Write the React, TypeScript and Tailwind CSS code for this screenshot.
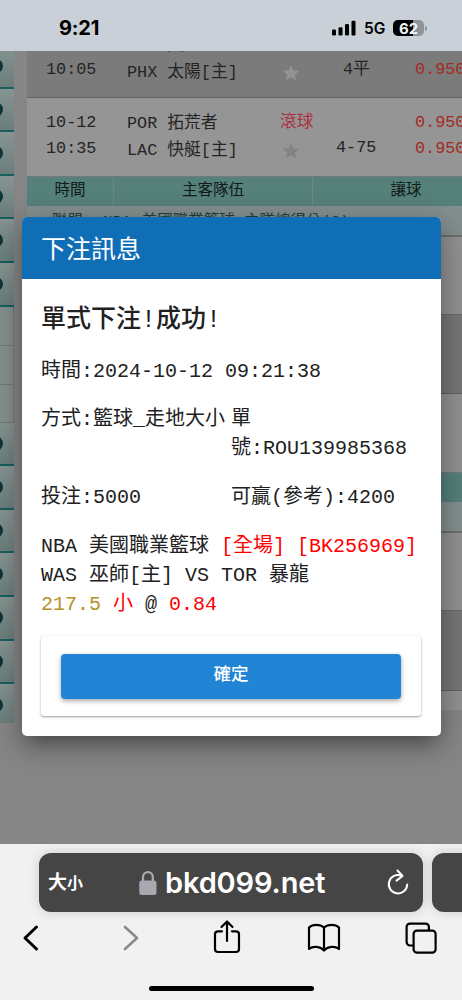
import clsx from 'clsx'
import type { ReactNode } from 'react'

const mono = "font-['Liberation_Mono','Noto_Sans_CJK_TC',monospace]"
const sans = "font-['Inter','Noto_Sans_CJK_TC',sans-serif]"

function StatusBar() {
  return (
    <header className={clsx(sans, 'flex h-[51px] shrink-0 items-start justify-between bg-[#c9d0d8] pl-[59px] pr-[35px]')}>
      <span className="pt-[14px] text-[20px] font-bold leading-[28px] tracking-[-0.2px] text-black">9:21</span>
      <div className="flex items-center pt-[17px]">
        <svg width="24" height="16" viewBox="0 0 24 16">
          <rect x="0" y="9.5" width="4" height="6" rx="1.2" />
          <rect x="6.5" y="7.2" width="4" height="8.3" rx="1.2" />
          <rect x="13" y="4" width="4" height="11.5" rx="1.2" />
          <rect x="19.5" y="0.7" width="4" height="14.8" rx="1.2" />
        </svg>
        <span className="ml-[8px] w-[22px] pt-[2px] text-[15.5px] font-semibold leading-[20px] text-black">5G</span>
        <div className="ml-[7px] flex h-[16px] w-[31px] items-center justify-center rounded-[5px] bg-[linear-gradient(90deg,#000_64%,#8e949c_64%)]">
          <span className="text-[15px] font-bold leading-none text-[#f1f4f7]">62</span>
        </div>
        <div className="ml-[1px] h-[5px] w-[2px] rounded-r-full bg-[#8e949c]" />
      </div>
    </header>
  )
}

function MenuItem({ last }: { last?: boolean }) {
  return (
    <div
      className={clsx(
        'flex shrink-0 items-center overflow-hidden bg-linear-to-b from-[#869492] to-[#6b7e7b]',
        last ? 'h-[39px] pt-[3px]' : 'h-[43.6px] border-b-2 border-[#17605f]',
      )}
    >
      <div className="-ml-[12px] size-[14.5px] rounded-full bg-[#0c3535]" />
    </div>
  )
}

function SideMenu() {
  return (
    <aside className="flex w-[14px] shrink-0 flex-col overflow-hidden">
      <div className="-mt-[6px] shrink-0">
        {[0, 1, 2, 3, 4, 5].map((i) => (
          <MenuItem key={i} />
        ))}
      </div>
      <div className="h-[116px] shrink-0 border-r border-[#727876] bg-[#84908e]">
        <div className="h-[39px] border-b border-[#727876]" />
        <div className="h-[39px] border-b border-[#727876]" />
        <div className="h-[38px] border-b border-[#727876]" />
      </div>
      {[0, 1, 2, 3, 4, 5, 6].map((i) => (
        <MenuItem key={i} last={i === 6} />
      ))}
    </aside>
  )
}

function Star({ className }: { className: string }) {
  return (
    <svg width="18" height="18" viewBox="0 0 24 24" className={className}>
      <path d="M12 1l3 7.6 8.2.5-6.3 5.2 2.1 8-7-4.500-7 4.500 2.100-8L.8 9.100l8.200-.5z" fill="currentColor" />
    </svg>
  )
}

function TableHead({ labels = true }: { labels?: boolean }) {
  return (
    <div className="flex h-[30px] shrink-0 border-t border-[#747a79] bg-[#56807a] text-center text-[15.5px] leading-[28px] text-[#101b1a]">
      <div className="w-[87px] shrink-0 border-r border-[#748582]">{labels && '時間'}</div>
      <div className="w-[199px] shrink-0 border-r border-[#748582]">{labels && '主客隊伍'}</div>
      <div className="w-[186px] shrink-0">{labels && '讓球'}</div>
    </div>
  )
}

function GameRow({ className, time, teams, extra, line, odds }: {
  className: string
  time: ReactNode
  teams: ReactNode
  extra: ReactNode
  line: ReactNode
  odds: ReactNode
}) {
  return (
    <div className={clsx('flex shrink-0 overflow-hidden whitespace-pre text-[16.8px] leading-[25.500px] text-[#242424]', className)}>
      <div className="w-[81px] shrink-0">{time}</div>
      <div className="w-[153px] shrink-0 pt-[1px] leading-[26.500px]">{teams}</div>
      <div className="w-[56px] shrink-0">{extra}</div>
      <div className="w-[79px] shrink-0">{line}</div>
      <div className="shrink-0 text-[#a32b22]">{odds}</div>
    </div>
  )
}

function OddsTable() {
  return (
    <main className="ml-[13px] flex w-[435px] shrink-0 flex-col overflow-hidden">
      <GameRow
        className="h-[47px] items-end border-b border-[#636363] bg-[#7b7b7b] pb-[15px] pl-[19px]"
        time={<div>10:05</div>}
        teams={<div className="-mb-[4px]"><div>SAC 國王</div><div>PHX 太陽[主]</div></div>}
        extra={<Star className="ml-[2px] text-[#949494]" />}
        line={<div className="pl-[7px]">4平</div>}
        odds={<div>0.950</div>}
      />
      <GameRow
        className="h-[78px] bg-[#959595] pl-[19px] pt-[12px]"
        time={<><div>10-12</div><div>10:35</div></>}
        teams={<><div>POR 拓荒者</div><div>LAC 快艇[主]</div></>}
        extra={<><div className="text-[#ad3340]">滾球</div><Star className="ml-[2px] mt-[6px] text-[#838383]" /></>}
        line={<div className="pt-[25px]">4-75</div>}
        odds={<><div>0.950</div><div>0.950</div></>}
      />
      <TableHead />
      <div className="h-[31px] shrink-0 whitespace-pre border-b-2 border-[#6b6f6e] bg-[#84908e] pl-[25px] pt-[3px] text-[15.500px] leading-[26px] text-[#213f3d] [word-spacing:1.5px]">
        聯盟: NBA 美國職業籃球-主隊總得分(Q)
      </div>
      <div className="h-[78px] shrink-0 border-b border-[#6a6a6a] bg-[#929292]" />
      <div className="h-[79px] shrink-0 border-b border-[#606060] bg-[#777777]" />
      <div className="h-[78px] shrink-0 bg-[#929292]" />
      <TableHead labels={false} />
      <div className="h-[31px] shrink-0 border-b-2 border-[#6b6f6e] bg-[#84908e]" />
      <div className="h-[78px] shrink-0 border-b border-[#6a6a6a] bg-[#929292]" />
      <div className="h-[80px] shrink-0 border-b border-[#606060] bg-[#777777]" />
      <div className="h-[19px] shrink-0 bg-[#929292]" />
    </main>
  )
}

function BetDialog() {
  return (
    <section className="absolute left-[22px] top-[166px] flex h-[519px] w-[419px] flex-col overflow-hidden rounded-[5px] bg-white text-[20px] leading-[29px] text-[#212121] shadow-[0_12px_18px_-8px_rgba(0,0,0,0.35),0_8px_28px_6px_rgba(0,0,0,0.22)]">
      <h2 className="h-[62px] shrink-0 bg-[#106eb7] pl-[19px] pt-[4px] text-[25px] font-normal leading-[61px] text-white">下注訊息</h2>
      <div className="flex flex-col pl-[19px] pr-5 pt-[23px]">
        <h3 className="text-[25px] font-medium leading-[38px]">單式下注!成功!</h3>
        <p className="mt-[17px]">時間:2024-10-12 09:21:38</p>
        <div className="mt-[19px] flex whitespace-nowrap">
          <p className="w-[190px]">方式:籃球_走地大小</p>
          <p>單<br />號:ROU139985368</p>
        </div>
        <div className="mt-[20px] flex whitespace-nowrap">
          <p className="w-[190px]">投注:5000</p>
          <p>可贏(參考):4200</p>
        </div>
        <p className="mt-[20px] whitespace-nowrap">
          NBA 美國職業籃球 <span className="text-[#ff0000]">[全場] [BK256969]</span>
          <br />
          WAS 巫師[主] VS TOR 暴龍
          <br />
          <span className="text-[#b8902a]">217.5</span> <span className="text-[#ff0000]">小</span> @ <span className="text-[#ff0000]">0.84</span>
        </p>
        <div className="mt-[17px] h-[80px] rounded-[3px] px-5 pt-[18px] shadow-[0_1px_3px_rgba(0,0,0,0.28),0_1px_1px_rgba(0,0,0,0.14)]">
          <button className="h-[45px] w-full rounded-[4px] bg-[#2184d5] pb-[3px] text-[17.5px] font-medium leading-[42px] text-white shadow-[0_2px_5px_rgba(0,0,0,0.35)]">
            確定
          </button>
        </div>
      </div>
    </section>
  )
}

function BrowserBar() {
  return (
    <footer className={clsx(sans, 'flex h-[156px] shrink-0 flex-col overflow-hidden bg-[#f1f1f1] pt-[9px]')}>
      <div className="ml-[39px] flex h-[59px] w-[440px] shrink-0 gap-[9px]">
        <div className="flex w-[384px] shrink-0 items-center rounded-[12px] bg-[#454545] pl-[9px] text-white shadow-[0_0_12px_rgba(0,0,0,0.16)]">
          <span className="w-[91px] whitespace-nowrap text-[19px] font-bold leading-[30px]">
            大<span className="text-[16px]">小</span>
          </span>
          <svg width="18" height="26" viewBox="0 0 18 26" className="shrink-0">
            <rect x="0.3" y="10.500" width="17.200" height="14.500" rx="2.500" fill="#a9a8b0" />
            <path d="M4 11.500V7a4.900 4.900 0 0 1 9.800 0v4.500" fill="none" stroke="#a9a8b0" strokeWidth="2.300" />
          </svg>
          <span className="ml-[8px] w-[221px] pt-px text-[29px] font-semibold leading-[40px] tracking-[-0.15px]">bkd099.net</span>
          <svg width="24" height="28" viewBox="0 0 24 28" fill="none" stroke="#fff" strokeWidth="2" strokeLinecap="round" strokeLinejoin="round" className="shrink-0">
            <path d="M15.500 6.700A9.200 9.200 0 1 0 21.200 15.500" />
            <path d="M11.500 1.500l5 5.500-6 4.600" />
          </svg>
        </div>
        <div className="w-[60px] shrink-0 rounded-[12px] bg-[#454545] shadow-[0_0_12px_rgba(0,0,0,0.16)]" />
      </div>
      <div className="-ml-[18px] grid h-[52px] w-[488px] shrink-0 grid-cols-5 place-items-center">
        <svg width="18" height="28" viewBox="0 0 18 28" fill="none" stroke="#000" strokeWidth="3" strokeLinecap="round" strokeLinejoin="round">
          <path d="M14.500 3L3 14l11.500 11" />
        </svg>
        <svg width="18" height="28" viewBox="0 0 18 28" fill="none" stroke="#8a8a8a" strokeWidth="2.600" strokeLinecap="round" strokeLinejoin="round" className="ml-[5px]">
          <path d="M3 3l12 11L3 25" />
        </svg>
        <svg width="28" height="36" viewBox="0 0 28 36" fill="none" stroke="#000" strokeWidth="2.200" strokeLinecap="round" strokeLinejoin="round" className="ml-[2px] -mt-[2px]">
          <path d="M9 12.300H5a3 3 0 0 0-3 3V30a3 3 0 0 0 3 3h18a3 3 0 0 0 3-3V15.300a3 3 0 0 0-3-3h-4" />
          <path d="M14 22V2.500M8.500 8L14 2.500 19.500 8" />
        </svg>
        <svg width="34" height="30" viewBox="0 0 34 30" fill="none" stroke="#000" strokeWidth="2.200" strokeLinecap="round" strokeLinejoin="round">
          <path d="M17 4.500C13 1 5.500 1 2 4.500V26c3.500-3 11.500-3 15 1.500 3.500-4.500 11.500-4.500 15-1.500V4.500C28.500 1 21 1 17 4.500zM17 4.500v23" />
        </svg>
        <svg width="32" height="32" viewBox="0 0 32 32" fill="none" stroke="#000" strokeWidth="2.200" strokeLinejoin="round">
          <path d="M8.500 23.500H5a3.400 3.400 0 0 1-3.400-3.400V5A3.400 3.400 0 0 1 5 1.600h15.500A3.400 3.400 0 0 1 23.900 5v3.500" />
          <rect x="8.600" y="8.600" width="22" height="22" rx="3.400" />
        </svg>
      </div>
      <div className="ml-[149px] mt-[22px] h-[5px] w-[165px] shrink-0 rounded-full bg-black" />
    </footer>
  )
}

export default function App() {
  return (
    <div className="flex h-[1000px] w-[462px] flex-col overflow-hidden">
      <StatusBar />
      <div className={clsx(mono, 'relative flex h-[793px] shrink-0 items-start overflow-hidden bg-[#868686]')}>
        <SideMenu />
        <OddsTable />
        <BetDialog />
      </div>
      <BrowserBar />
    </div>
  )
}
